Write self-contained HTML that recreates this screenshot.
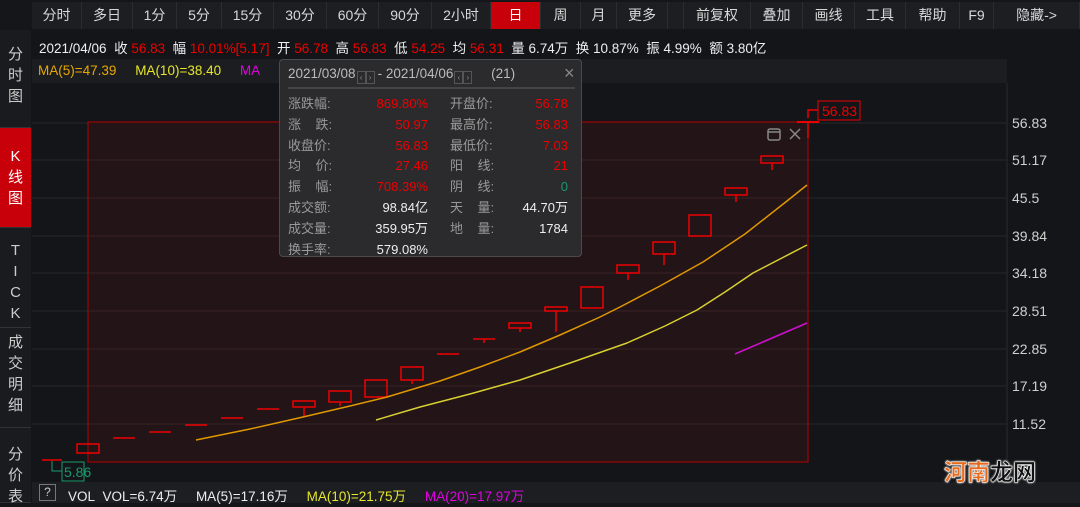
<!DOCTYPE html>
<html><head><meta charset="utf-8">
<style>
*{margin:0;padding:0;box-sizing:border-box}
body{width:1080px;height:503px;background:#131518;overflow:hidden;position:relative;font-family:"Liberation Sans","Noto Sans CJK SC",sans-serif;color:#ddd}
.a{position:absolute;white-space:nowrap}
.tb{position:absolute;top:2px;height:27px;background:#1d1e22;border-right:1px solid #2c2d31;color:#d8d8d8;font-size:14px;line-height:27px;text-align:center}
.side{position:absolute;left:0;width:31px;background:#1a1b1f;border-bottom:1px solid #333;color:#ccc;font-size:15px;text-align:center;line-height:21px}
.r{color:#e00}
.pl{color:#999;font-size:13px}
.pv{font-size:13px;text-align:right}
.ab{display:inline-block;width:9px;height:13px;border:1px solid #555;vertical-align:-2px;font-size:8px;line-height:11px;color:#888;text-align:center}
</style></head><body>
<div class="a" style="left:0;top:0;width:1080px;height:30px;background:#15161a"></div>
<div class="tb" style="left:32px;width:50px">分时</div>
<div class="tb" style="left:82px;width:51px">多日</div>
<div class="tb" style="left:133px;width:44px">1分</div>
<div class="tb" style="left:177px;width:45px">5分</div>
<div class="tb" style="left:222px;width:52px">15分</div>
<div class="tb" style="left:274px;width:53px">30分</div>
<div class="tb" style="left:327px;width:52px">60分</div>
<div class="tb" style="left:379px;width:53px">90分</div>
<div class="tb" style="left:432px;width:59px">2小时</div>
<div class="tb" style="left:491px;width:50px;background:#c8000a;color:#fff">日</div>
<div class="tb" style="left:541px;width:40px">周</div>
<div class="tb" style="left:581px;width:36px">月</div>
<div class="tb" style="left:617px;width:51px">更多</div>
<div class="tb" style="left:668px;width:16px"></div>
<div class="tb" style="left:684px;width:67px">前复权</div>
<div class="tb" style="left:751px;width:52px">叠加</div>
<div class="tb" style="left:803px;width:52px">画线</div>
<div class="tb" style="left:855px;width:51px">工具</div>
<div class="tb" style="left:906px;width:54px">帮助</div>
<div class="tb" style="left:960px;width:34px">F9</div>
<div class="tb" style="left:994px;width:86px">隐藏-&gt;</div>
<div class="side" style="top:30px;height:98px;padding-top:14px">分<br>时<br>图</div>
<div class="side" style="top:128px;height:100px;background:#c8000a;color:#fff;padding-top:18px">K<br>线<br>图</div>
<div class="side" style="top:228px;height:100px;padding-top:12px">T<br>I<br>C<br>K</div>
<div class="side" style="top:328px;height:100px;padding-top:4px">成<br>交<br>明<br>细</div>
<div class="side" style="top:428px;height:75px;padding-top:16px">分<br>价<br>表</div>
<div class="a" style="left:39px;top:37px;font-size:13.5px;color:#eee">2021/04/06&nbsp; 收 <span class="r">56.83</span>&nbsp; 幅 <span class="r">10.01%[5.17]</span>&nbsp; 开 <span class="r">56.78</span>&nbsp; 高 <span class="r">56.83</span>&nbsp; 低 <span class="r">54.25</span>&nbsp; 均 <span class="r">56.31</span>&nbsp; 量 6.74万&nbsp; 换 10.87%&nbsp; 振 4.99%&nbsp; 额 3.80亿</div>
<div class="a" style="left:32px;top:59px;width:975px;height:24px;background:#1c1d21"></div>
<div class="a" style="left:38px;top:63px;font-size:13.5px"><span style="color:#e6a800">MA(5)=47.39</span>&nbsp;&nbsp;&nbsp;&nbsp; <span style="color:#e6e62a">MA(10)=38.40</span>&nbsp;&nbsp;&nbsp;&nbsp; <span style="color:#e000e0">MA</span></div>
<svg class="a" style="left:0;top:0" width="1080" height="503">
<line x1="1007" y1="83" x2="1007" y2="482" stroke="#2a2b2f"/>
<g stroke="#26272b" stroke-width="1">
<line x1="32" y1="123" x2="1007" y2="123"/><line x1="32" y1="160" x2="1007" y2="160"/><line x1="32" y1="198" x2="1007" y2="198"/><line x1="32" y1="236" x2="1007" y2="236"/><line x1="32" y1="273" x2="1007" y2="273"/><line x1="32" y1="311" x2="1007" y2="311"/><line x1="32" y1="349" x2="1007" y2="349"/><line x1="32" y1="386" x2="1007" y2="386"/><line x1="32" y1="424" x2="1007" y2="424"/>
</g>
<rect x="88" y="122" width="720" height="340" fill="#231418" stroke="#b00" stroke-width="1"/>
<g stroke="#3a2225"><line x1="88" y1="160" x2="808" y2="160"/><line x1="88" y1="198" x2="808" y2="198"/><line x1="88" y1="236" x2="808" y2="236"/><line x1="88" y1="273" x2="808" y2="273"/><line x1="88" y1="311" x2="808" y2="311"/><line x1="88" y1="349" x2="808" y2="349"/><line x1="88" y1="386" x2="808" y2="386"/><line x1="88" y1="424" x2="808" y2="424"/></g>
<g stroke="#e00" stroke-width="1.5" fill="none">
<line x1="42" y1="460" x2="62" y2="460"/>
<rect x="77" y="444" width="22" height="9"/>
<line x1="113" y1="438" x2="135" y2="438"/><line x1="149" y1="432" x2="171" y2="432"/><line x1="185" y1="425" x2="207" y2="425"/><line x1="221" y1="418" x2="243" y2="418"/><line x1="257" y1="409" x2="279" y2="409"/>
<rect x="293" y="401" width="22" height="6"/><line x1="304" y1="407" x2="304" y2="416"/>
<rect x="329" y="391" width="22" height="11"/><line x1="340" y1="402" x2="340" y2="406"/>
<rect x="365" y="380" width="22" height="17"/>
<rect x="401" y="367" width="22" height="13"/><line x1="412" y1="380" x2="412" y2="384"/>
<line x1="437" y1="354" x2="459" y2="354"/>
<line x1="473" y1="339" x2="495" y2="339"/><line x1="484" y1="339" x2="484" y2="343"/>
<rect x="509" y="323" width="22" height="5"/><line x1="520" y1="328" x2="520" y2="332"/>
<rect x="545" y="307" width="22" height="4"/><line x1="556" y1="311" x2="556" y2="332"/>
<rect x="581" y="287" width="22" height="21"/>
<rect x="617" y="265" width="22" height="8"/><line x1="628" y1="273" x2="628" y2="280"/>
<rect x="653" y="242" width="22" height="12"/><line x1="664" y1="254" x2="664" y2="265"/>
<rect x="689" y="215" width="22" height="21"/>
<rect x="725" y="188" width="22" height="7"/><line x1="736" y1="195" x2="736" y2="202"/>
<rect x="761" y="156" width="22" height="7"/><line x1="772" y1="163" x2="772" y2="170"/>
<line x1="797" y1="122" x2="819" y2="122" stroke-width="2"/><line x1="808" y1="122" x2="808" y2="138"/>
<polyline points="808,118 808,110 818,110"/>
</g>
<rect x="818" y="101" width="42" height="19" fill="#131518" stroke="#e00"/>
<text x="822" y="116" fill="#e00" font-size="14" font-family="Liberation Sans">56.83</text>
<polyline points="52,461 52,471 62,471" stroke="#1a9a6a" fill="none"/>
<rect x="62" y="462" width="22" height="19" fill="#131518" stroke="#1a9a6a"/>
<text x="64" y="477" fill="#1a9a6a" font-size="14" font-family="Liberation Sans">5.86</text>
<polyline points="196,440 250,429 303,417 350,406 387,397 440,381 480,367 520,352 560,335 600,317 620,307 660,286 703,262 745,234 787,201 807,185" stroke="#e09800" stroke-width="1.5" fill="none" stroke-linejoin="round"/>
<polyline points="376,420 420,407 470,394 520,380 570,363 627,343 665,326 697,310 725,292 753,273 780,259 807,245" stroke="#d8d030" stroke-width="1.5" fill="none" stroke-linejoin="round"/>
<line x1="735" y1="354" x2="807" y2="323" stroke="#d010d0" stroke-width="1.5"/>
<rect x="768" y="129" width="12" height="11" rx="2" fill="none" stroke="#888" stroke-width="1.5"/><line x1="768" y1="132" x2="780" y2="132" stroke="#888" stroke-width="1.5"/>
<path d="M790,129 L800,139 M800,129 L790,139" stroke="#888" stroke-width="1.5"/>
<g fill="#d0d0d0" font-size="14" font-family="Liberation Sans">
<text x="1012" y="128">56.83</text><text x="1012" y="165">51.17</text><text x="1012" y="203">45.5</text><text x="1012" y="241">39.84</text><text x="1012" y="278">34.18</text><text x="1012" y="316">28.51</text><text x="1012" y="354">22.85</text><text x="1012" y="391">17.19</text><text x="1012" y="429">11.52</text>
</g>
</svg>
<div class="a" style="left:279px;top:59px;width:303px;height:198px;background:#2b2b2d;border:1px solid #4a4a4c;border-radius:4px">
<div class="a" style="left:8px;top:6px;font-size:13.5px;color:#bbb">2021/03/08<span class="ab" style="margin-left:1px">‹</span><span class="ab" style="margin-right:3px">›</span>- 2021/04/06<span class="ab" style="margin-left:1px">‹</span><span class="ab">›</span>&nbsp;&nbsp;&nbsp;&nbsp; (21)</div>
<div class="a" style="left:284px;top:3px;font-size:18px;color:#888">×</div>
<div class="a" style="left:8px;top:27px;width:287px;height:2px;background:#444"></div>
<div class="a" style="left:8px;top:34px;line-height:20.8px">
<div class="pl">涨跌幅:<br>涨&nbsp;&nbsp;&nbsp;&nbsp;跌:<br>收盘价:<br>均&nbsp;&nbsp;&nbsp;&nbsp;价:<br>振&nbsp;&nbsp;&nbsp;&nbsp;幅:<br>成交额:<br>成交量:<br>换手率:</div></div>
<div class="a pv" style="left:70px;top:34px;width:78px;line-height:20.8px"><span class="r">869.80%</span><br><span class="r">50.97</span><br><span class="r">56.83</span><br><span class="r">27.46</span><br><span class="r">708.39%</span><br><span style="color:#eee">98.84亿</span><br><span style="color:#eee">359.95万</span><br><span style="color:#eee">579.08%</span></div>
<div class="a" style="left:170px;top:34px;line-height:20.8px"><div class="pl">开盘价:<br>最高价:<br>最低价:<br>阳&nbsp;&nbsp;&nbsp;&nbsp;线:<br>阴&nbsp;&nbsp;&nbsp;&nbsp;线:<br>天&nbsp;&nbsp;&nbsp;&nbsp;量:<br>地&nbsp;&nbsp;&nbsp;&nbsp;量:</div></div>
<div class="a pv" style="left:220px;top:34px;width:68px;line-height:20.8px"><span class="r">56.78</span><br><span class="r">56.83</span><br><span class="r">7.03</span><br><span class="r">21</span><br><span style="color:#1a9a6a">0</span><br><span style="color:#eee">44.70万</span><br><span style="color:#eee">1784</span></div>
</div>
<div class="a" style="left:32px;top:482px;width:1048px;height:21px;background:#1d1e22"></div>
<div class="a" style="left:39px;top:484px;width:17px;height:17px;border:1px solid #777;font-size:12px;line-height:15px;text-align:center;color:#ccc">?</div>
<div class="a" style="left:68px;top:485px;font-size:13.5px;color:#eee">VOL&nbsp; VOL=6.74万&nbsp;&nbsp;&nbsp;&nbsp; MA(5)=17.16万&nbsp;&nbsp;&nbsp;&nbsp; <span style="color:#e6e62a">MA(10)=21.75万</span>&nbsp;&nbsp;&nbsp;&nbsp; <span style="color:#e000e0">MA(20)=17.97万</span></div>
<div class="a" style="left:944px;top:453px;font-size:23px;font-weight:bold;-webkit-text-stroke:0.5px #fff;text-shadow:0 0 2px #fff,0 0 2px #fff"><span style="color:#e86a1a">河南</span><span style="color:#111">龙网</span></div>
</body></html>
